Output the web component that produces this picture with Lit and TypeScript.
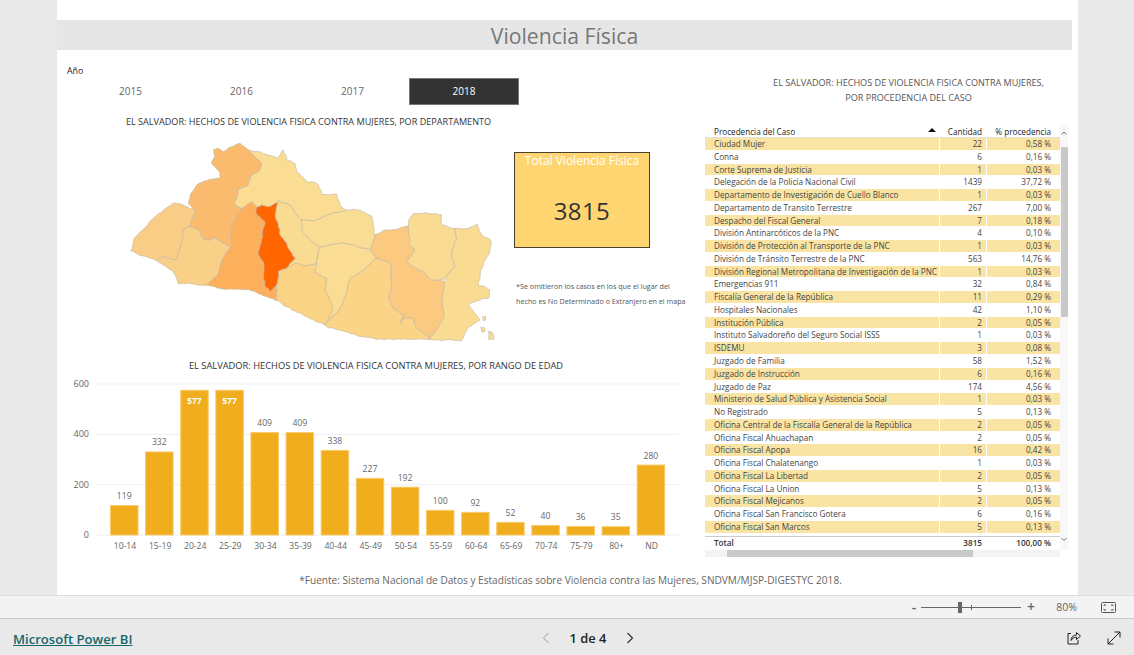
import { LitElement, html, svg, css } from "lit";
import { customElement } from "lit/decorators.js";

type Pt = [number, number];

// map traced by department, shared borders use the same vertices
const depts: { color: string; pts: Pt[] }[] = [
  { color: "#f9cd85", pts: [[32,362],[42,325],[70,298],[100,265],[130,240],[165,218],[195,228],[225,240],[215,275],[205,290],[187,297],[190,315],[183,345],[170,390],[150,388],[130,378],[110,392],[70,378]] },
  { color: "#f9d088", pts: [[110,392],[130,378],[150,388],[170,390],[183,345],[190,315],[187,297],[205,290],[215,290],[240,300],[250,325],[270,330],[285,323],[310,340],[335,352],[320,365],[305,395],[295,430],[260,465],[220,462],[175,462],[160,425]] },
  { color: "#fbbb6e", pts: [[225,240],[205,222],[210,195],[230,165],[260,152],[300,145],[298,125],[275,100],[285,80],[280,60],[295,55],[310,65],[330,52],[360,40],[385,60],[405,80],[425,100],[415,125],[395,135],[385,165],[355,180],[345,225],[365,235],[345,270],[335,290],[335,352],[310,340],[285,323],[270,330],[250,325],[240,300],[215,290],[205,290],[215,275]] },
  { color: "#fdb05c", pts: [[365,235],[395,215],[410,232],[408,240],[410,255],[435,275],[428,320],[415,375],[430,395],[435,470],[450,485],[470,465],[470,490],[468,512],[430,497],[400,483],[340,478],[300,475],[260,465],[295,430],[305,395],[320,365],[335,352],[335,290],[345,270]] },
  { color: "#fadc93", pts: [[385,60],[420,65],[470,85],[490,60],[500,90],[525,100],[530,125],[555,150],[590,160],[605,195],[650,192],[660,225],[680,240],[620,255],[590,270],[545,270],[530,255],[510,225],[475,212],[472,218],[445,230],[425,225],[410,232],[395,215],[365,235],[345,225],[355,180],[385,165],[395,135],[415,125],[425,100],[405,80]] },
  { color: "#fadb92", pts: [[472,218],[475,212],[510,225],[530,255],[545,270],[545,300],[575,335],[600,350],[590,400],[555,408],[525,400],[500,415],[525,385],[500,340],[480,315],[475,290],[465,255]] },
  { color: "#fadd95", pts: [[545,270],[590,270],[620,255],[680,240],[720,240],[755,258],[765,315],[750,360],[710,350],[660,340],[600,350],[575,335],[545,300]] },
  { color: "#fadc93", pts: [[600,350],[660,340],[710,350],[750,360],[770,385],[730,420],[690,445],[680,490],[655,545],[615,585],[635,545],[635,520],[615,480],[620,445],[585,425],[590,400]] },
  { color: "#fbd385", pts: [[470,490],[470,465],[475,425],[500,415],[525,400],[555,408],[590,400],[585,425],[620,445],[615,480],[635,520],[635,545],[615,585],[560,560],[500,530],[468,512]] },
  { color: "#fbd487", pts: [[615,585],[655,545],[680,490],[690,445],[730,420],[770,385],[810,400],[815,470],[805,500],[820,535],[855,555],[840,580],[850,565],[880,565],[890,595],[925,615],[930,628],[870,628],[770,628],[690,610],[620,590]] },
  { color: "#fbca80", pts: [[750,360],[765,315],[795,300],[830,298],[865,288],[868,345],[885,360],[862,395],[880,410],[915,430],[935,450],[972,455],[965,520],[972,555],[950,600],[930,628],[925,615],[890,595],[880,565],[850,565],[840,580],[855,555],[820,535],[805,500],[815,470],[810,400],[770,385]] },
  { color: "#fadb92", pts: [[865,288],[865,275],[880,250],[925,250],[965,255],[965,285],[1005,295],[1010,330],[995,365],[1005,410],[970,450],[935,450],[915,430],[880,410],[862,395],[885,360],[868,345]] },
  { color: "#fadb92", pts: [[1005,295],[1045,295],[1072,282],[1085,315],[1112,330],[1108,370],[1090,400],[1075,465],[1110,480],[1105,505],[1065,515],[1045,525],[1060,545],[1080,570],[1040,600],[1025,632],[975,630],[930,628],[950,600],[972,555],[965,520],[972,455],[1005,410],[995,365],[1010,330]] },
  { color: "#ff6600", pts: [[410,232],[425,225],[445,230],[472,218],[465,255],[475,290],[480,315],[500,340],[525,385],[500,415],[475,425],[470,465],[450,485],[435,470],[430,395],[415,375],[428,320],[435,275],[410,255],[408,240]] },
];

const islands: Pt[][] = [
  [[1088,560],[1097,560],[1097,570],[1090,572]],
  [[1082,592],[1092,592],[1095,604],[1086,606]],
  [[1105,604],[1116,606],[1122,628],[1106,628]],
];

// midpoint wobble, hashed on the segment so both neighbours get the same edge
function noise(n: number) {
  const s = Math.sin(n * 12.9898) * 43758.5453;
  return s - Math.floor(s) - 0.5;
}

function rough(a: Pt, b: Pt): Pt[] {
  const len = Math.hypot(a[0] - b[0], a[1] - b[1]);
  if (len < 9) return [];
  const sx = a[0] + b[0];
  const sy = a[1] + b[1];
  const k = Math.min(len * 0.22, 4.5);
  const m: Pt = [sx / 2 + noise(sx * 0.37 + sy) * k, sy / 2 + noise(sy * 0.71 + sx + 3) * k];
  return [...rough(a, m), m, ...rough(m, b)];
}

function pathOf(pts: Pt[]) {
  const out: Pt[] = [];
  pts.forEach((p, i) => {
    out.push(p, ...rough(p, pts[(i + 1) % pts.length]));
  });
  return "M" + out.map((p) => p[0].toFixed(1) + " " + p[1].toFixed(1)).join("L") + "Z";
}

const ages: [string, number][] = [
  ["10-14", 119], ["15-19", 332], ["20-24", 577], ["25-29", 577], ["30-34", 409], ["35-39", 409],
  ["40-44", 338], ["45-49", 227], ["50-54", 192], ["55-59", 100], ["60-64", 92], ["65-69", 52],
  ["70-74", 40], ["75-79", 36], ["80+", 35], ["ND", 280],
];

const rows: [string, string, string][] = [
  ["Ciudad Mujer", "22", "0,58 %"],
  ["Conna", "6", "0,16 %"],
  ["Corte Suprema de Justicia", "1", "0,03 %"],
  ["Delegación de la Policía Nacional Civil", "1439", "37,72 %"],
  ["Departamento de Investigación de Cuello Blanco", "1", "0,03 %"],
  ["Departamento de Transito Terrestre", "267", "7,00 %"],
  ["Despacho del Fiscal General", "7", "0,18 %"],
  ["División Antinarcóticos de la PNC", "4", "0,10 %"],
  ["División de Protección al Transporte de la PNC", "1", "0,03 %"],
  ["División de Tránsito Terrestre de la PNC", "563", "14,76 %"],
  ["División Regional Metropolitana de Investigación de la PNC", "1", "0,03 %"],
  ["Emergencias 911", "32", "0,84 %"],
  ["Fiscalía General de la República", "11", "0,29 %"],
  ["Hospitales Nacionales", "42", "1,10 %"],
  ["Institución Pública", "2", "0,05 %"],
  ["Instituto Salvadoreño del Seguro Social ISSS", "1", "0,03 %"],
  ["ISDEMU", "3", "0,08 %"],
  ["Juzgado de Familia", "58", "1,52 %"],
  ["Juzgado de Instrucción", "6", "0,16 %"],
  ["Juzgado de Paz", "174", "4,56 %"],
  ["Ministerio de Salud Pública y Asistencia Social", "1", "0,03 %"],
  ["No Registrado", "5", "0,13 %"],
  ["Oficina Central de la Fiscalía General de la República", "2", "0,05 %"],
  ["Oficina Fiscal Ahuachapan", "2", "0,05 %"],
  ["Oficina Fiscal Apopa", "16", "0,42 %"],
  ["Oficina Fiscal Chalatenango", "1", "0,03 %"],
  ["Oficina Fiscal La Libertad", "2", "0,05 %"],
  ["Oficina Fiscal La Union", "5", "0,13 %"],
  ["Oficina Fiscal Mejicanos", "2", "0,05 %"],
  ["Oficina Fiscal San Francisco Gotera", "6", "0,16 %"],
  ["Oficina Fiscal San Marcos", "5", "0,13 %"],
];

@customElement("app-root")
export class AppRoot extends LitElement {
  static styles = css`
    :host {
      display: flex;
      flex-direction: column;
      width: 1134px;
      height: 655px;
      overflow: hidden;
      background: #e9e9e9;
      font-family: "Open Sans", "Liberation Sans", sans-serif;
      color: #444;
    }
    .canvas {
      height: 595px;
      flex: none;
    }
    .report {
      width: 1021px;
      height: 595px;
      margin-left: 57px;
      background: #fff;
      padding-top: 20px;
      box-sizing: border-box;
    }
    .banner {
      width: 1015px;
      height: 30px;
      background: #e6e6e6;
      color: #777;
      font-size: 21.2px;
      line-height: 32px;
      text-align: center;
    }
    .body {
      display: grid;
      grid-template-columns: 648px 1fr;
    }
    .left {
      display: flex;
      flex-direction: column;
    }
    .label {
      margin: 14px 0 0 10px;
      height: 14px;
      font-size: 8.8px;
      line-height: 14px;
      color: #222;
    }
    .years {
      display: flex;
      margin-left: 18px;
      height: 27px;
    }
    .year {
      width: 111px;
      font-size: 10px;
      line-height: 27px;
      text-align: center;
      color: #666;
      box-sizing: border-box;
    }
    .year.on {
      background: #333;
      color: #fff;
      border: 1px solid #777;
      line-height: 25px;
      margin-left: 1px;
      width: 110px;
    }
    .sub {
      font-size: 9.1px;
      line-height: 12px;
      height: 12px;
      color: #333;
      text-align: center;
      white-space: nowrap;
    }
    .sub.dept {
      margin: 11px 0 0 0;
      width: 503px;
    }
    .sub.age {
      margin: 0;
      width: 638px;
      font-size: 9.3px;
    }
    .map-row {
      display: flex;
      height: 230px;
      margin-left: 63px;
      margin-top: 2px;
    }
    .map {
      width: 380px;
      height: 230px;
      flex: none;
      filter: blur(0.3px);
    }
    .side {
      margin-left: 14px;
      display: flex;
      flex-direction: column;
    }
    .kpi {
      width: 136px;
      height: 96px;
      margin-top: 22px;
      box-sizing: border-box;
      background: #ffd571;
      border: 1px solid #4a4030;
      text-align: center;
    }
    .kpi-title {
      color: #fff;
      font-size: 12px;
      line-height: 16px;
      white-space: nowrap;
    }
    .kpi-value {
      color: #333;
      font-size: 24px;
      line-height: 30px;
      margin-top: 27px;
      letter-spacing: 0.4px;
    }
    .note {
      margin: 31px 0 0 2px;
      font-size: 7.2px;
      line-height: 15px;
      color: #555;
      white-space: nowrap;
    }
    .chart {
      display: block;
      margin: 3px 0 0 3px;
      width: 640px;
      height: 180px;
      font-size: 8.6px;
      fill: #666;
    }
    .right {
      display: flex;
      flex-direction: column;
    }
    .sub.head {
      margin-left: 44px;
      width: 319px;
      height: 30px;
      margin-top: 25px;
      line-height: 15px;
      color: #555;
      white-space: nowrap;
    }
    .grid-wrap {
      display: flex;
      margin-top: 20px;
      width: 363px;
    }
    .tbl {
      width: 355px;
      flex: none;
      font-size: 8.17px;
      color: #444;
    }
    .row {
      display: flex;
      height: 12.78px;
      line-height: 12px;
      box-sizing: border-box;
      border-bottom: 1px solid #fff;
      white-space: nowrap;
    }
    .row.alt {
      background: #fae4a3;
    }
    .row.top {
      height: 13px;
      line-height: 13px;
      border-bottom: 1px solid #e2e2e2;
      color: #222;
    }
    .name {
      width: 235px;
      padding-left: 9px;
      box-sizing: border-box;
      border-right: 1px solid #fff;
      position: relative;
    }
    .qty {
      width: 47px;
      padding-right: 4px;
      box-sizing: border-box;
      text-align: right;
      border-right: 1px solid #fff;
    }
    .pct {
      flex: 1;
      padding-right: 9px;
      text-align: right;
    }
    .caret {
      position: absolute;
      right: 3px;
      top: 3px;
      width: 0;
      height: 0;
      border-left: 4px solid transparent;
      border-right: 4px solid transparent;
      border-bottom: 4px solid #111;
    }
    .row.total {
      margin-top: 2px;
      height: 13px;
      border-top: 1px solid #ccc;
      border-bottom: 0;
      font-weight: 600;
      color: #333;
      box-sizing: content-box;
    }
    .vbar {
      width: 8px;
      display: flex;
      flex-direction: column;
      align-items: center;
      background: #f8f8f8;
    }
    .vbar svg {
      flex: none;
    }
    .vthumb {
      width: 7px;
      height: 170px;
      flex: none;
      background: #c9c9c9;
      margin-top: 1px;
    }
    .vfill {
      flex: 1;
    }
    .hbar {
      display: flex;
      align-items: center;
      width: 355px;
      height: 7px;
      background: #f3f3f3;
    }
    .hthumb {
      width: 246px;
      height: 7px;
      background: #c9c9c9;
      margin: 0 87px 0 22px;
      flex: none;
    }
    .source {
      width: 1027px;
      margin-top: 16px;
      font-size: 10.1px;
      line-height: 14px;
      text-align: center;
      color: #666;
      white-space: nowrap;
    }
    .zoombar {
      height: 24px;
      flex: none;
      box-sizing: border-box;
      background: #f3f3f3;
      border-top: 1px solid #dcdcdc;
      border-bottom: 1px solid #c8c8c8;
      display: flex;
      align-items: center;
      justify-content: flex-end;
      color: #666;
    }
    .zoom-sign {
      font-size: 14px;
      line-height: 14px;
      font-weight: 600;
      width: 10px;
      text-align: center;
    }
    .slider {
      position: relative;
      width: 100px;
      height: 1px;
      margin: 0 5px 0 2px;
      background: #666;
    }
    .thumb {
      position: absolute;
      left: 37px;
      top: -5px;
      width: 4px;
      height: 11px;
      background: #666;
    }
    .tick {
      position: absolute;
      left: 50px;
      top: -2px;
      width: 1px;
      height: 5px;
      background: #666;
    }
    .pctz {
      margin-left: 18px;
      font-size: 10.5px;
      color: #666;
      width: 25px;
      text-align: center;
    }
    .fit {
      margin: 0 18px 0 22px;
      display: block;
    }
    .footer {
      flex: 1;
      display: grid;
      grid-template-columns: 1fr auto 1fr;
      align-items: center;
      padding: 1px 13px 0;
    }
    .brand {
      font-size: 13.1px;
      font-weight: 600;
      color: #14676b;
      text-decoration: underline;
      white-space: nowrap;
    }
    .pager {
      display: flex;
      align-items: center;
      gap: 19px;
      font-size: 12.9px;
      font-weight: 600;
      color: #252423;
      margin-left: 42px;
    }
    .actions {
      display: flex;
      justify-content: flex-end;
      gap: 26px;
    }
    .actions svg,
    .pager svg {
      display: block;
    }
  `;

  renderMap() {
    return html`<svg class="map" viewBox="0 0 1140 690">
      ${depts.map(
        (d) => svg`<path d=${pathOf(d.pts)} fill=${d.color} stroke="#c2b8a4" stroke-width="2" stroke-linejoin="round"></path>`
      )}
      ${islands.map(
        (p) => svg`<path d=${pathOf(p)} fill="#fadb92" stroke="#c2b8a4" stroke-width="2"></path>`
      )}
    </svg>`;
  }

  renderChart() {
    const base = 160;
    const unit = 151 / 600;
    return html`<svg class="chart" viewBox="0 0 640 180">
      ${[600, 400, 200, 0].map((v) => {
        const y = base - v * unit;
        return svg`<line x1="36" x2="619" y1=${y} y2=${y} stroke="#efefef"></line>
          <text x="29" y=${y + 3} text-anchor="end" font-size="9">${v}</text>`;
      })}
      ${ages.map(([label, v], i) => {
        const x = 50 + i * 35.11;
        const h = v * unit;
        const inside = v > 500;
        return svg`<rect x=${x + 0.5} y=${base - h + 0.5} width="27.5" height=${h - 0.5} fill="#f0ad1e" stroke="#f8ca6a"></rect>
          <text x=${x + 14.2} y=${inside ? base - h + 14 : base - h - 6} text-anchor="middle" font-weight=${inside ? 700 : 400} fill=${inside ? "#fff" : "#666"}>${v}</text>
          <text x=${x + 15} y=${base + 14} text-anchor="middle" >${label}</text>`;
      })}
    </svg>`;
  }

  renderTable() {
    return html`
      <div class="grid-wrap">
        <div class="tbl">
          <div class="row top">
            <div class="name">Procedencia del Caso<span class="caret"></span></div>
            <div class="qty">Cantidad</div>
            <div class="pct">% procedencia</div>
          </div>
          ${rows.map(
            (r, i) => html`<div class="row ${i % 2 === 0 ? "alt" : ""}">
              <div class="name">${r[0]}</div>
              <div class="qty">${r[1]}</div>
              <div class="pct">${r[2]}</div>
            </div>`
          )}
          <div class="row total">
            <div class="name">Total</div>
            <div class="qty">3815</div>
            <div class="pct">100,00 %</div>
          </div>
        </div>
        <div class="vbar">
          <svg width="8" height="21" viewBox="0 0 8 21" fill="none" stroke="#777"><path d="M1.5 9.5L4 7l2.5 2.5"></path></svg>
          <div class="vthumb"></div>
          <div class="vfill"></div>
          <svg width="8" height="14" viewBox="0 0 8 14" fill="none" stroke="#777"><path d="M1.5 2L4 4.5 6.5 2"></path></svg>
        </div>
      </div>
      <div class="hbar">
        <div class="hthumb"></div>
      </div>
    `;
  }

  render() {
    return html`
      <div class="canvas">
        <div class="report">
          <div class="banner">Violencia Física</div>
          <div class="body">
            <div class="left">
              <div class="label">Año</div>
              <div class="years">
                <div class="year">2015</div>
                <div class="year">2016</div>
                <div class="year">2017</div>
                <div class="year on">2018</div>
              </div>
              <div class="sub dept">EL SALVADOR: HECHOS DE VIOLENCIA FISICA CONTRA MUJERES, POR DEPARTAMENTO</div>
              <div class="map-row">
                ${this.renderMap()}
                <div class="side">
                  <div class="kpi">
                    <div class="kpi-title">Total Violencia Física</div>
                    <div class="kpi-value">3815</div>
                  </div>
                  <div class="note">*Se omitieron los casos en los que el lugar del<br />hecho es No Determinado o Extranjero en el mapa</div>
                </div>
              </div>
              <div class="sub age">EL SALVADOR: HECHOS DE VIOLENCIA FISICA CONTRA MUJERES, POR RANGO DE EDAD</div>
              ${this.renderChart()}
            </div>
            <div class="right">
              <div class="sub head">EL SALVADOR: HECHOS DE VIOLENCIA FISICA CONTRA MUJERES,<br />POR PROCEDENCIA DEL CASO</div>
              ${this.renderTable()}
            </div>
          </div>
          <div class="source">*Fuente: Sistema Nacional de Datos y Estadísticas sobre Violencia contra las Mujeres, SNDVM/MJSP-DIGESTYC 2018.</div>
        </div>
      </div>
      <div class="zoombar">
        <div class="zoom-sign">-</div>
        <div class="slider"><div class="thumb"></div><div class="tick"></div></div>
        <div class="zoom-sign">+</div>
        <div class="pctz">80%</div>
        <svg class="fit" width="15" height="11" viewBox="0 0 15 11" fill="none" stroke="#555">
          <rect x="0.5" y="0.5" width="14" height="10" rx="1"></rect>
          <path d="M3 4V3h2M10 3h2v1M12 7v1h-2M5 8H3V7"></path>
        </svg>
      </div>
      <div class="footer">
        <div><span class="brand">Microsoft Power BI</span></div>
        <div class="pager">
          <svg width="10" height="12" viewBox="0 0 10 12" fill="none" stroke="#bbb" stroke-width="1.2"><path d="M7.5 1L2.5 6l5 5"></path></svg>
          <span>1 de 4</span>
          <svg width="10" height="12" viewBox="0 0 10 12" fill="none" stroke="#333" stroke-width="1.2"><path d="M2.5 1l5 5-5 5"></path></svg>
        </div>
        <div class="actions">
          <svg width="14" height="14" viewBox="0 0 14 14" fill="none" stroke="#222" stroke-width="1">
            <path d="M4 2.5H1v10.5h10V9"></path>
            <path d="M4 9.5c0-3.5 2.5-5.5 5.5-5.5V1.5L13.5 5 9.5 8.5V6.2C7 6.2 5.2 7.4 4 9.5z"></path>
          </svg>
          <svg width="14" height="14" viewBox="0 0 14 14" fill="none" stroke="#222" stroke-width="1">
            <path d="M1 13L13 1M7.5 1H13v5.5M1 7.5V13h5.5"></path>
          </svg>
        </div>
      </div>
    `;
  }
}
